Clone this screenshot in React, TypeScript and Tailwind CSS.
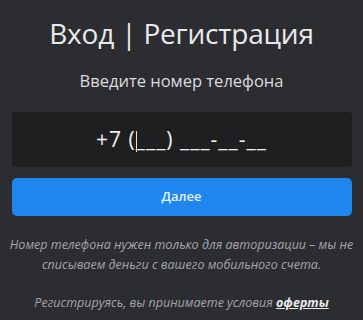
import React from 'react';

export default function App() {
  return (
    <div className="w-[363px] h-[320px] bg-[#2c2d31] flex flex-col items-center overflow-hidden" style={{ fontFamily: '"Open Sans", "Noto Sans", sans-serif' }}>
      <h1 className="mt-[15px] text-[28px] leading-[36px] text-[#e9e9ea] tracking-[-0.2px]">
        Вход | Регистрация
      </h1>
      <p className="mt-[19px] text-[16.5px] leading-[22px] text-[#dcdcde]">Введите номер телефона</p>
      <div className="mt-[20px] w-[340px] h-[55px] rounded-[4px] bg-[#1f1f21] flex items-center justify-center">
        <span className="text-[21px] text-[#f0f0f0] tracking-[1px]">
          +7 (<span className="inline-block w-[1px] h-[21px] bg-[#e0e0e0] align-middle -mr-[1px]" />___) ___-__-__
        </span>
      </div>
      <button className="mt-[11px] w-[340px] h-[38px] rounded-[5px] bg-[#1e86ee] text-[13px] font-semibold text-[#e6f1ff]">
        Далее
      </button>
      <p className="mt-[19px] w-[350px] text-center italic text-[12.5px] leading-[20px] text-[#a4a5aa]">
        Номер телефона нужен только для авторизации – мы не списываем деньги с вашего мобильного счета.
      </p>
      <p className="mt-[18px] text-center italic text-[12.5px] leading-[20px] text-[#a4a5aa]">
        Регистрируясь, вы принимаете условия <span className="font-bold text-[#e8e8ea] underline">оферты</span>
      </p>
    </div>
  );
}
